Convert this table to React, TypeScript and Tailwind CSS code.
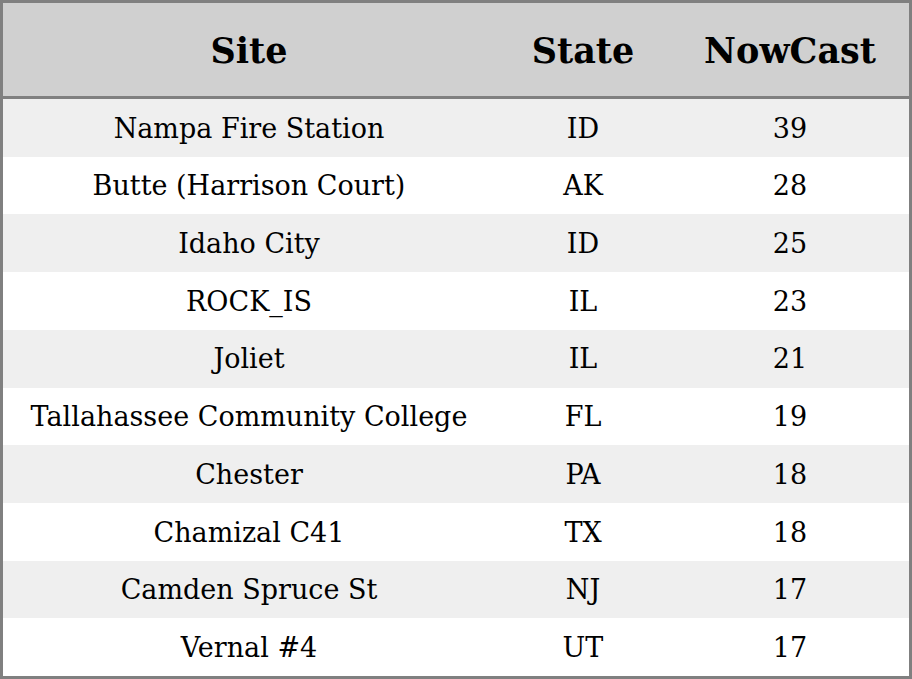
const rows: [string, string, number][] = [
  ["Nampa Fire Station", "ID", 39],
  ["Butte (Harrison Court)", "AK", 28],
  ["Idaho City", "ID", 25],
  ["ROCK_IS", "IL", 23],
  ["Joliet", "IL", 21],
  ["Tallahassee Community College", "FL", 19],
  ["Chester", "PA", 18],
  ["Chamizal C41", "TX", 18],
  ["Camden Spruce St", "NJ", 17],
  ["Vernal #4", "UT", 17],
];

export default function App() {
  return (
    <div className="flex h-[679px] w-[912px] flex-col border-[3px] border-[#808080] bg-white font-['DejaVu_Serif',serif] text-black">
      <div className="grid h-[96px] shrink-0 grid-cols-[492px_176px_1fr] items-center border-b-[3px] border-[#808080] bg-[#d0d0d0] pt-[3px] text-[35px] font-bold">
        <div className="text-center">Site</div>
        <div className="text-center">State</div>
        <div className="text-center">NowCast</div>
      </div>
      {rows.map(([site, state, value], i) => (
        <div
          key={site}
          className={`grid flex-1 grid-cols-[492px_176px_1fr] items-center pt-[2px] text-[27px] ${
            i % 2 === 0 ? "bg-[#efefef]" : "bg-white"
          }`}
        >
          <div className="text-center">{site}</div>
          <div className="text-center">{state}</div>
          <div className="text-center">{value}</div>
        </div>
      ))}
    </div>
  );
}
